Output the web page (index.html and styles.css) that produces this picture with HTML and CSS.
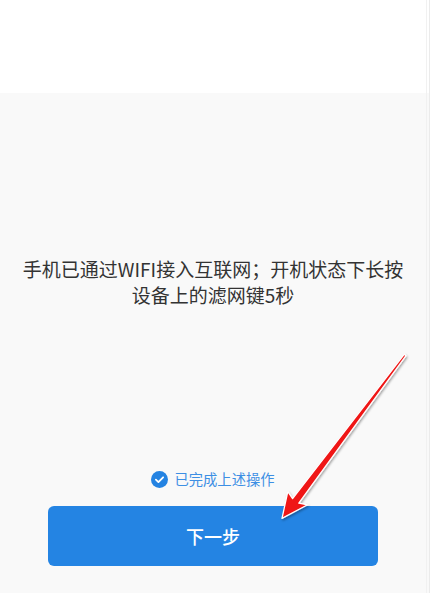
FILE: index.html
```html
<!DOCTYPE html>
<html lang="zh-CN">
<head>
<meta charset="utf-8">
<title>配网</title>
<link rel="stylesheet" href="styles.css">
</head>
<body>
<div class="frame">
  <div class="screen">
    <header class="topbar"></header>
    <main class="content">
      <p class="instruction">手机已通过WIFI接入互联网；开机状态下长按<br>设备上的滤网键5秒</p>
      <div class="spacer"></div>
      <label class="confirm">
        <svg class="check" width="17" height="17" viewBox="0 0 17 17">
          <circle cx="8.5" cy="8.5" r="8.5" fill="#2483e2"/>
          <path d="M4.9 8.7 L7.4 11.1 L12.1 6.3" fill="none" stroke="#fff" stroke-width="1.8" stroke-linecap="round" stroke-linejoin="round"/>
        </svg>
        <span class="confirm-text">已完成上述操作</span>
      </label>
      <button class="next">下一步</button>
    </main>
  </div>
  <div class="edge"></div>
</div>
<svg class="annot" width="430" height="593" viewBox="0 0 430 593">
  <defs>
    <filter id="sh" x="-20%" y="-20%" width="140%" height="140%">
      <feDropShadow dx="1" dy="1.5" stdDeviation="1.2" flood-color="#000" flood-opacity="0.35"/>
    </filter>
    <linearGradient id="rg" x1="0" y1="0" x2="1" y2="1">
      <stop offset="0" stop-color="#ff2a2a"/>
      <stop offset="1" stop-color="#e00000"/>
    </linearGradient>
  </defs>
  <polygon filter="url(#sh)" fill="url(#rg)" stroke="#fff" stroke-width="1.3" stroke-linejoin="round"
    points="404.2,354.3 406,355.7 298.8,503.2 307.6,504.8 282,518.4 287.8,491.6 292.6,498.6"/>
</svg>
</body>
</html>
```
FILE: styles.css
```css
html, body {
  margin: 0;
  padding: 0;
}
body {
  width: 430px;
  height: 593px;
  overflow: hidden;
  position: relative;
  background: #f9f9f9;
  font-family: "Noto Sans CJK SC", "Noto Sans", sans-serif;
}
.frame {
  display: flex;
  height: 593px;
}
.screen {
  width: 426px;
  display: flex;
  flex-direction: column;
}
.edge {
  flex: 1;
  background: linear-gradient(#ffffff 0 93px, #f9f9f9 93px);
  border-left: 1px solid #f1f1f1;
  border-right: 1px solid #ebebeb;
}
.topbar {
  height: 93px;
  background: #ffffff;
  flex: none;
}
.content {
  flex: 1;
  display: flex;
  flex-direction: column;
  align-items: center;
  background: #f9f9f9;
  padding-top: 163px;
  padding-bottom: 27px;
}
.instruction {
  margin: 0;
  font-size: 19px;
  line-height: 26px;
  color: #333333;
  text-align: center;
}
.spacer {
  flex: 1;
}
.confirm {
  display: flex;
  align-items: center;
  gap: 6px;
  height: 20px;
  margin-bottom: 17px;
}
.check {
  display: block;
}
.confirm-text {
  font-size: 14.3px;
  color: #3d8fe4;
  line-height: 20px;
}
.next {
  width: 330px;
  height: 60px;
  border: none;
  border-radius: 6px;
  background: #2484e3;
  color: #ffffff;
  font-family: "Noto Sans CJK SC", "Noto Sans", sans-serif;
  font-size: 18px;
  font-weight: 500;
  padding: 0;
}
.annot {
  position: absolute;
  left: 0;
  top: 0;
  pointer-events: none;
}
```
